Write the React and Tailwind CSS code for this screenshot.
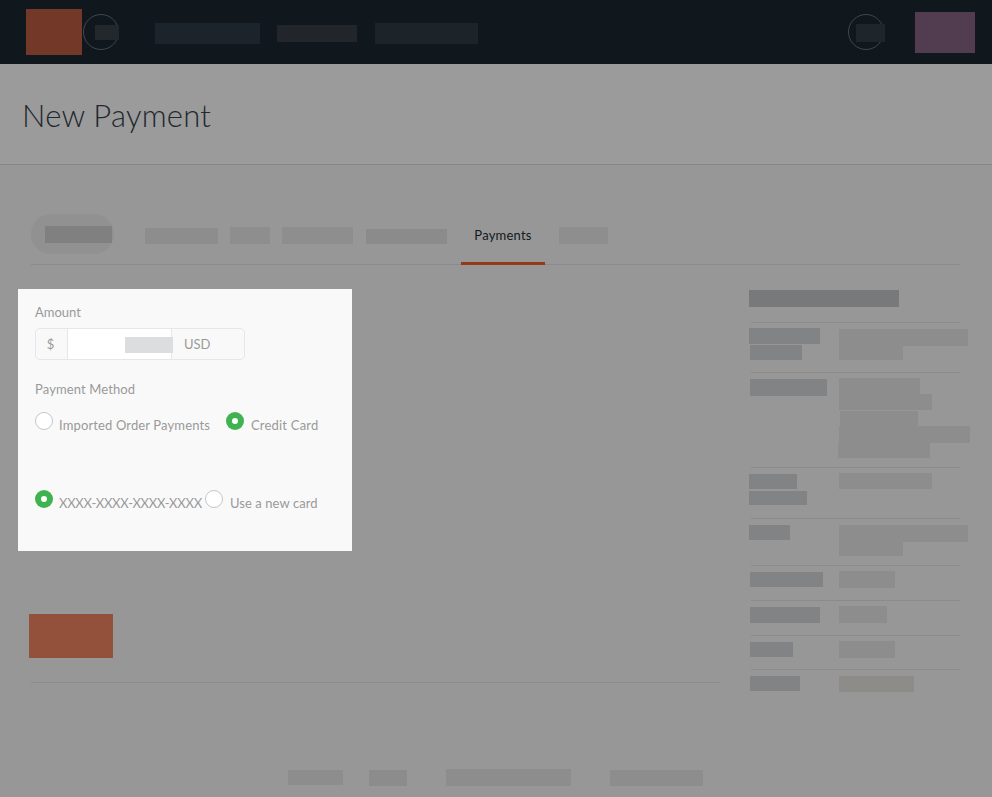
import React from "react";

const Bar = ({ className }) => <div className={`shrink-0 ${className}`} />;

const LABEL = "bg-[#818385]";
const VALUE = "bg-[#8d8d8d]";

function NavBar() {
  return (
    <nav className="flex h-16 items-start bg-[#10181e]">
      <Bar className="mt-[9px] ml-[26px] h-[46px] w-14 bg-[#733828]" />
      <div className="mt-3.5 ml-px h-9 w-9 shrink-0 rounded-full border border-[#43474a] pt-2.5 pl-[11px]">
        <Bar className="h-[15px] w-6 bg-[#22282b]" />
      </div>
      <Bar className="mt-[23px] ml-9 h-[21px] w-[105px] bg-[#1c242b]" />
      <Bar className="mt-[25px] ml-[17px] h-[17px] w-20 bg-[#22262a]" />
      <Bar className="mt-[23px] ml-[18px] h-[21px] w-[103px] bg-[#1c2429]" />
      <div className="mt-3.5 ml-auto h-9 w-9 shrink-0 rounded-full border border-[#43474a] pt-[9px] pl-[7px]">
        <Bar className="h-[18px] w-[29px] bg-[#1e262b]" />
      </div>
      <Bar className="mt-3 mr-[17px] ml-[31px] h-[41px] w-[60px] bg-[#523c50]" />
    </nav>
  );
}

function Tabs() {
  return (
    <div className="mr-8 ml-[31px] flex h-[100px] items-start border-b border-[#8b8b8b]">
      <div className="mt-[49px] h-10 w-[83px] shrink-0 rounded-full bg-[#919191] pt-3 pl-3.5">
        <Bar className="h-[17px] w-[67px] bg-[#808080]" />
      </div>
      <Bar className="mt-[63px] ml-[31px] h-4 w-[73px] bg-[#8d8d8d]" />
      <Bar className="mt-[62px] ml-3 h-[17px] w-10 bg-[#8e8e8e]" />
      <Bar className="mt-[62px] ml-3 h-[17px] w-[71px] bg-[#8e8e8e]" />
      <Bar className="mt-16 ml-[13px] h-[15px] w-[81px] bg-[#8b8b8b]" />
      <div className="mt-[49px] ml-3.5 h-[51px] w-[84px] shrink-0 border-b-[3px] border-[#933a1c] text-center text-[13px] leading-[42px] tracking-[0.22px] text-[#12191d]">
        Payments
      </div>
      <Bar className="mt-[62px] ml-3.5 h-[17px] w-[49px] bg-[#8e8e8e]" />
    </div>
  );
}

function Radio({ checked, label, className = "", textClass = "ml-1.5 tracking-[0.13px]" }) {
  return (
    <label className={`flex shrink-0 items-start ${className}`}>
      {checked ? (
        <span className="flex h-[18px] w-[18px] shrink-0 items-center justify-center rounded-full bg-[#3fb34f]">
          <span className="h-1.5 w-1.5 rounded-full bg-white" />
        </span>
      ) : (
        <span className="h-[18px] w-[18px] shrink-0 rounded-full border border-[#c3c7cb] bg-white" />
      )}
      <span className={`mt-1 leading-[18px] whitespace-nowrap ${textClass}`}>{label}</span>
    </label>
  );
}

function PaymentPanel() {
  return (
    <section className="mt-6 ml-[18px] h-[262px] w-[334px] bg-[#f9f9f9] pt-3.5 pl-[17px] text-[13px] text-[#999999]">
      <div className="leading-[18px]">Amount</div>
      <div className="mt-[7px] flex h-8 w-[210px] overflow-hidden rounded-[5px] border border-[#e6e7e8] leading-[30px]">
        <div className="w-8 border-r border-[#e6e7e8] pr-0.5 text-center">$</div>
        <div className="w-[104px] border-r border-[#e6e7e8] bg-white pt-2 pl-[57px]">
          <Bar className="relative h-4 w-12 bg-[#dbdddf]" />
        </div>
        <div className="pl-3">USD</div>
      </div>
      <div className="mt-5 leading-[18px] tracking-[0.12px]">Payment Method</div>
      <div className="mt-3.5 flex">
        <Radio label="Imported Order Payments" className="w-[191px]" />
        <Radio checked label="Credit Card" textClass="ml-[7px] tracking-[0.2px]" />
      </div>
      <div className="mt-14 flex">
        <Radio
          checked
          label="XXXX-XXXX-XXXX-XXXX"
          className="w-[170px]"
          textClass="ml-1.5 tracking-[-0.25px]"
        />
        <Radio label="Use a new card" textClass="ml-[7px] tracking-[0.07px]" />
      </div>
    </section>
  );
}

const rows = [
  {
    height: "h-[49px]",
    labels: ["mt-[5px] h-4 w-[71px]", "mt-px ml-px h-[15px] w-[52px]"],
    values: ["mt-1.5 h-[17px] w-[129px]", "h-3.5 w-16"],
  },
  {
    height: "h-[94px]",
    labels: ["mt-1.5 ml-px h-[17px] w-[77px]"],
    values: [
      "mt-[5px] h-4 w-[81px]",
      "h-4 w-[93px]",
      "mt-px ml-px h-[15px] w-[78px]",
      "h-[17px] w-[131px]",
      "-ml-px h-[15px] w-[92px]",
    ],
  },
  {
    height: "h-[50px]",
    labels: ["mt-1.5 h-[15px] w-12", "mt-0.5 h-3.5 w-[58px]"],
    values: ["mt-[5px] h-4 w-[93px]"],
  },
  {
    height: "h-[46px]",
    labels: ["mt-1.5 h-[15px] w-[41px]"],
    values: ["mt-1.5 h-[17px] w-[129px]", "h-3.5 w-16"],
  },
  {
    height: "h-[34px]",
    labels: ["mt-1.5 ml-px h-[15px] w-[73px]"],
    values: ["mt-[5px] h-[17px] w-14"],
  },
  {
    height: "h-[34px]",
    labels: ["mt-1.5 ml-px h-4 w-[70px]"],
    values: ["mt-[5px] h-[17px] w-12"],
  },
  {
    height: "h-[33px]",
    labels: ["mt-1.5 ml-px h-[15px] w-[43px]"],
    values: ["mt-[5px] h-[17px] w-14"],
  },
  {
    height: "h-[34px]",
    labels: ["mt-1.5 ml-px h-[15px] w-[50px]"],
    values: ["mt-1.5 h-4 w-[75px]"],
    tone: "bg-[#8e8c89]",
  },
];

function Sidebar() {
  return (
    <aside className="mr-[22px] ml-auto w-[221px] pt-[25px]">
      <Bar className="mb-[15px] h-[17px] w-[150px] bg-[#77797b]" />
      {rows.map((row, i) => (
        <div key={i}>
          <div className="ml-0.5 h-px w-[209px] bg-[#8b8b8b]" />
          <div className={`flex ${row.height}`}>
            <div className="flex w-[90px] shrink-0 flex-col">
              {row.labels.map((size, j) => (
                <Bar key={j} className={`${size} ${LABEL}`} />
              ))}
            </div>
            <div className="flex flex-col">
              {row.values.map((size, j) => (
                <Bar key={j} className={`${size} ${row.tone ?? VALUE}`} />
              ))}
            </div>
          </div>
        </div>
      ))}
    </aside>
  );
}

export default function App() {
  return (
    <div className="flex h-[797px] w-[992px] flex-col overflow-hidden bg-[#979797] font-['Lato',sans-serif]">
      <NavBar />
      <header className="h-[101px] border-b border-[#868686] bg-[#9b9b9b] pt-[30px] pl-[22px]">
        <h1 className="text-[31px] leading-[42px] font-light tracking-[0.22px] text-[#22282d]">
          New Payment
        </h1>
      </header>
      <Tabs />
      <div className="flex h-[504px] shrink-0">
        <main className="w-[720px]">
          <PaymentPanel />
          <Bar className="mt-[63px] ml-[29px] h-11 w-[84px] bg-[#93503b]" />
          <div className="mt-6 ml-[31px] h-px bg-[#8b8b8b]" />
        </main>
        <Sidebar />
      </div>
      <footer className="flex items-start pl-[288px]">
        <Bar className="mt-px h-[15px] w-[55px] bg-[#8d8d8d]" />
        <Bar className="mt-px ml-[26px] h-4 w-[38px] bg-[#8c8c8c]" />
        <Bar className="ml-[39px] h-[17px] w-[125px] bg-[#8c8d8c]" />
        <Bar className="mt-px ml-[39px] h-4 w-[93px] bg-[#8d8d8d]" />
      </footer>
    </div>
  );
}
